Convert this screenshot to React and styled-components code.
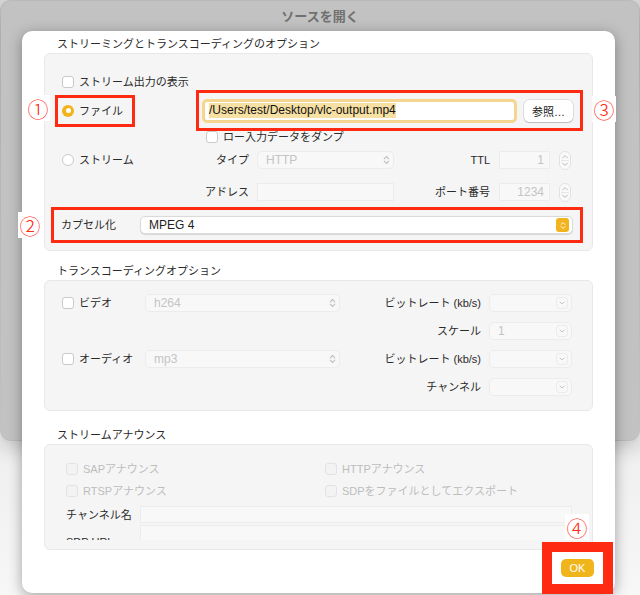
import React from 'react';
import styled, { createGlobalStyle } from 'styled-components';

const GlobalStyle = createGlobalStyle`
  html, body { margin: 0; padding: 0; }
  body {
    font-family: "Liberation Sans", "Noto Sans CJK JP", sans-serif;
    color: #2a2a2a;
  }
`;

const RED = '#ff2a12';

const Screen = styled.div`
  width: 640px;
  height: 595px;
  overflow: hidden;
  display: grid;
  grid-template-areas: "stack";
  background: linear-gradient(#d6d6d6, #efefef 75%, #f7f7f7);
`;

const BackWindow = styled.div`
  grid-area: stack;
  align-self: start;
  margin: 1px 1px 0 1px;
  height: 439px;
  border-radius: 10px;
  background: #c2c2c2;
  box-shadow: 0 0 0 1px rgba(0, 0, 0, 0.1), 0 8px 20px rgba(0, 0, 0, 0.2);
`;

const TitleBar = styled.div`
  height: 28px;
  display: flex;
  align-items: center;
  justify-content: center;
  font-size: 13px;
  font-weight: bold;
  color: #707070;
`;

const Sheet = styled.div`
  grid-area: stack;
  align-self: start;
  justify-self: start;
  margin: 31px 0 0 22px;
  width: 593px;
  height: 562px;
  box-sizing: border-box;
  padding: 0 22px;
  background: #fff;
  border-radius: 10px;
  box-shadow: 0 3px 14px rgba(0, 0, 0, 0.35);
  display: flex;
  flex-direction: column;
`;

const SectionTitle = styled.div`
  margin-top: ${p => p.$top}px;
  margin-bottom: 2px;
  padding-left: 13px;
  height: 14px;
  line-height: 14px;
  font-size: 11px;
  color: #2a2a2a;
`;

const Group = styled.div`
  height: ${p => p.$h}px;
  box-sizing: border-box;
  border: 1px solid #e8e8e8;
  border-radius: 6px;
  background: #f5f5f5;
  padding-top: ${p => p.$pt}px;
  display: flex;
  flex-direction: column;
`;

const Row = styled.div`
  display: flex;
  align-items: ${p => p.$align || 'center'};
  height: ${p => p.$h || 18}px;
  flex: none;
  margin-top: ${p => p.$mt || 0}px;
  padding-left: ${p => p.$pl || 0}px;
`;

const Text = styled.span`
  font-size: 11px;
  line-height: 14px;
  white-space: nowrap;
  padding-top: ${p => p.$drop || 0}px;
  color: ${p => (p.$off ? '#bdbdbd' : '#2a2a2a')};
`;

const Cell = styled.div`
  width: ${p => p.$w}px;
  flex: none;
  display: flex;
  align-items: center;
  justify-content: ${p => p.$justify || 'flex-start'};
  gap: 5px;
`;

const Gap = styled.div`
  width: ${p => p.$w}px;
  flex: none;
`;

const Box = styled.span`
  width: 12px;
  height: 12px;
  box-sizing: border-box;
  flex: none;
  border-radius: 3px;
  border: 1px solid ${p => (p.$off ? '#e3e3e3' : '#c9c9c9')};
  background: ${p => (p.$off ? '#f3f3f3' : '#fff')};
`;

const Radio = styled.span`
  width: 12px;
  height: 12px;
  box-sizing: border-box;
  flex: none;
  border-radius: 50%;
  display: flex;
  align-items: center;
  justify-content: center;
  border: ${p => (p.$on ? 'none' : '1px solid #c9c9c9')};
  background: ${p => (p.$on ? '#f2b31c' : '#fff')};
  &::after {
    content: '';
    display: ${p => (p.$on ? 'block' : 'none')};
    width: 5px;
    height: 5px;
    border-radius: 50%;
    background: #fff;
  }
`;

const Check = ({ label, off, mr }) => (
  <Cell $w={mr}>
    <Box $off={off} />
    <Text $off={off}>{label}</Text>
  </Cell>
);

const Popup = styled.div`
  width: ${p => (p.$w ? `${p.$w}px` : 'auto')};
  flex: ${p => (p.$w ? 'none' : '1')};
  height: 18px;
  box-sizing: border-box;
  border-radius: 5px;
  display: flex;
  align-items: center;
  justify-content: space-between;
  padding: 0 3px 0 8px;
  font-size: 12px;
  color: ${p => (p.$on ? '#1e1e1e' : '#c4c4c4')};
  background: ${p => (p.$on ? '#fff' : '#f8f8f8')};
  border: 1px solid ${p => (p.$on ? '#dadada' : '#ececec')};
  box-shadow: ${p => (p.$on ? '0 1px 1px rgba(0,0,0,0.12)' : 'none')};
`;

const Field = styled.div`
  width: ${p => (p.$w ? `${p.$w}px` : 'auto')};
  flex: ${p => (p.$w ? 'none' : '1')};
  height: ${p => p.$h || 18}px;
  box-sizing: border-box;
  padding: 0 5px;
  display: flex;
  align-items: center;
  justify-content: flex-end;
  font-size: 12px;
  color: #c4c4c4;
  background: #f8f8f8;
  border: 1px solid #ececec;
`;

const Stepper = styled.div`
  width: 12px;
  height: 19px;
  box-sizing: border-box;
  flex: none;
  border: 1px solid #e2e2e2;
  border-radius: 6px;
  display: flex;
  align-items: center;
  justify-content: center;
  background: #fafafa;
`;

const YellowKnob = styled.div`
  width: 13px;
  height: 14px;
  border-radius: 3px;
  background: #f2b31c;
  display: flex;
  align-items: center;
  justify-content: center;
`;

const DownBox = styled.div`
  width: 12px;
  height: 12px;
  box-sizing: border-box;
  border: 1px solid #ececec;
  border-radius: 3px;
  display: flex;
  align-items: center;
  justify-content: center;
`;

const Frame = styled.div`
  position: relative;
  box-sizing: border-box;
  width: ${p => p.$w}px;
  height: ${p => p.$h}px;
  margin-left: ${p => p.$ml || 0}px;
  border: 3px solid ${RED};
  display: flex;
  align-items: center;
  padding: 0 7px 0 ${p => p.$pl}px;
  gap: ${p => p.$gap || 5}px;
`;

const Marker = styled.div`
  position: absolute;
  left: ${p => p.$x}px;
  top: ${p => p.$y}px;
  width: 24px;
  height: 26px;
  background: #fff;
  color: ${RED};
  font-family: "Noto Sans CJK JP", "DejaVu Sans", sans-serif;
  font-weight: 300;
  font-size: 21px;
  line-height: 26px;
  text-align: center;
`;

const PathInput = styled.div`
  width: 315px;
  height: 24px;
  box-sizing: border-box;
  flex: none;
  border: 3px solid #f4d690;
  border-radius: 5px;
  background: #fff;
  display: flex;
  align-items: center;
  padding-left: 4px;
`;

const Selected = styled.span`
  background: #f7e0a3;
  font-size: 12px;
  line-height: 15px;
  color: #111;
`;

const PushButton = styled.div`
  width: ${p => p.$w}px;
  height: ${p => p.$h}px;
  flex: none;
  border-radius: 5px;
  display: flex;
  align-items: center;
  justify-content: center;
  font-size: 11px;
  background: ${p => (p.$primary ? '#f1b51c' : '#fff')};
  color: ${p => (p.$primary ? '#fff' : '#222')};
  box-shadow: ${p => (p.$primary ? 'none' : '0 0 0 0.5px rgba(0,0,0,0.18), 0 1px 1px rgba(0,0,0,0.15)')};
`;

const Clip = styled.div`
  height: 34px;
  overflow: hidden;
  display: flex;
  flex-direction: column;
  gap: 2px;
`;

const Footer = styled.div`
  display: flex;
  justify-content: flex-end;
  margin-top: 9px;
  margin-right: -1px;
`;

const OkSpot = styled.div`
  position: relative;
  isolation: isolate;
  &::before {
    content: '';
    position: absolute;
    z-index: -1;
    top: -17px;
    left: -19px;
    right: -19px;
    bottom: -17px;
    border: 10px solid ${RED};
    background: #fff;
  }
`;

const UpDown = ({ color = '#c0c0c0', w = 7, h = 10 }) => (
  <svg width={w} height={h} viewBox="0 0 7 10" fill="none" stroke={color} strokeWidth="1.1" strokeLinecap="round" strokeLinejoin="round">
    <path d="M1.2 3.8 L3.5 1.5 L5.8 3.8" />
    <path d="M1.2 6.2 L3.5 8.5 L5.8 6.2" />
  </svg>
);

const StepperIcon = () => (
  <svg width="8" height="15" viewBox="0 0 8 15" fill="none" stroke="#b8b8b8" strokeWidth="1" strokeLinecap="round" strokeLinejoin="round">
    <path d="M1.5 5 L4 2.5 L6.5 5" />
    <path d="M0 7.5 H8" stroke="#e6e6e6" />
    <path d="M1.5 10 L4 12.5 L6.5 10" />
  </svg>
);

const Down = () => (
  <svg width="6" height="4" viewBox="0 0 6 4" fill="none" stroke="#c4c4c4" strokeWidth="1" strokeLinecap="round" strokeLinejoin="round">
    <path d="M1 1 L3 3 L5 1" />
  </svg>
);

const SmallPopup = ({ value }) => (
  <Popup $w={83}>
    <span>{value}</span>
    <DownBox><Down /></DownBox>
  </Popup>
);

export default function App() {
  return (
    <Screen>
      <GlobalStyle />
      <BackWindow>
        <TitleBar>ソースを開く</TitleBar>
      </BackWindow>

      <Sheet>
        <SectionTitle $top={6}>ストリーミングとトランスコーディングのオプション</SectionTitle>
        <Group $h={198} $pt={20}>
          <Row $h={16} $pl={17}>
            <Check label="ストリーム出力の表示" />
          </Row>

          <Row $h={41}>
            <Frame $w={80} $h={32} $ml={10} $pl={4}>
              <Marker $x={-32} $y={-3}>①</Marker>
              <Radio $on />
              <Text>ファイル</Text>
            </Frame>
            <Gap $w={61} />
            <Frame $w={387} $h={41} $pl={3} $gap={7}>
              <PathInput>
                <Selected>/Users/test/Desktop/vlc-output.mp4</Selected>
              </PathInput>
              <PushButton $w={49} $h={22}>参照…</PushButton>
              <Marker $x={393} $y={3}>③</Marker>
            </Frame>
          </Row>

          <Row $h={14} $mt={-1} $pl={161}>
            <Check label="ロー入力データをダンプ" />
          </Row>

          <Row $h={20} $mt={6} $pl={17}>
            <Cell $w={187} $justify="space-between">
              <Cell $w={100}>
                <Radio />
                <Text>ストリーム</Text>
              </Cell>
              <Text>タイプ</Text>
            </Cell>
            <Gap $w={8} />
            <Popup $w={137}>
              <span>HTTP</span>
              <UpDown />
            </Popup>
            <Cell $w={96} $justify="flex-end"><Text>TTL</Text></Cell>
            <Gap $w={9} />
            <Field $w={51}>1</Field>
            <Gap $w={9} />
            <Stepper><StepperIcon /></Stepper>
          </Row>

          <Row $h={20} $mt={12} $pl={17}>
            <Cell $w={187} $justify="flex-end"><Text>アドレス</Text></Cell>
            <Gap $w={8} />
            <Field $w={137} />
            <Cell $w={96} $justify="flex-end"><Text>ポート番号</Text></Cell>
            <Gap $w={9} />
            <Field $w={51}>1234</Field>
            <Gap $w={9} />
            <Stepper><StepperIcon /></Stepper>
          </Row>

          <Row $h={36} $mt={5}>
            <Frame $w={532} $h={36} $ml={6} $pl={7} $gap={0}>
              <Marker $x={-36} $y={2}>②</Marker>
              <Cell $w={74}><Text>カプセル化</Text></Cell>
              <Popup $on>
                <span>MPEG 4</span>
                <YellowKnob><UpDown color="#fff" w={6} h={9} /></YellowKnob>
              </Popup>
            </Frame>
          </Row>
        </Group>

        <SectionTitle $top={13}>トランスコーディングオプション</SectionTitle>
        <Group $h={131} $pt={13}>
          <Row $pl={17}>
            <Check label="ビデオ" mr={83} />
            <Popup $w={195}><span>h264</span><UpDown /></Popup>
            <Cell $w={141} $justify="flex-end"><Text>ビットレート (kb/s)</Text></Cell>
            <Gap $w={8} />
            <SmallPopup value="" />
          </Row>
          <Row $pl={17} $mt={10}>
            <Gap $w={278} />
            <Cell $w={141} $justify="flex-end"><Text>スケール</Text></Cell>
            <Gap $w={8} />
            <SmallPopup value="1" />
          </Row>
          <Row $pl={17} $mt={10}>
            <Check label="オーディオ" mr={83} />
            <Popup $w={195}><span>mp3</span><UpDown /></Popup>
            <Cell $w={141} $justify="flex-end"><Text>ビットレート (kb/s)</Text></Cell>
            <Gap $w={8} />
            <SmallPopup value="" />
          </Row>
          <Row $pl={17} $mt={10}>
            <Gap $w={278} />
            <Cell $w={141} $justify="flex-end"><Text>チャンネル</Text></Cell>
            <Gap $w={8} />
            <SmallPopup value="" />
          </Row>
        </Group>

        <SectionTitle $top={17}>ストリームアナウンス</SectionTitle>
        <Group $h={106} $pt={17}>
          <Row $h={14} $pl={21}>
            <Check label="SAPアナウンス" off mr={259} />
            <Check label="HTTPアナウンス" off />
          </Row>
          <Row $h={14} $mt={8} $pl={21}>
            <Check label="RTSPアナウンス" off mr={259} />
            <Check label="SDPをファイルとしてエクスポート" off />
          </Row>
          <Row $h={34} $mt={8} $pl={21} $align="flex-start">
            <Clip>
              <Row $h={17}>
                <Cell $w={74}><Text>チャンネル名</Text></Cell>
                <Field $w={432} $h={17} />
              </Row>
              <Row $h={26} $align="flex-start">
                <Cell $w={74}><Text $drop={10}>SDP URL</Text></Cell>
                <Field $w={432} $h={17} />
              </Row>
            </Clip>
          </Row>
        </Group>

        <Footer>
          <OkSpot>
            <Marker $x={4} $y={-45}>④</Marker>
            <PushButton $primary $w={33} $h={18}>OK</PushButton>
          </OkSpot>
        </Footer>
      </Sheet>
    </Screen>
  );
}
